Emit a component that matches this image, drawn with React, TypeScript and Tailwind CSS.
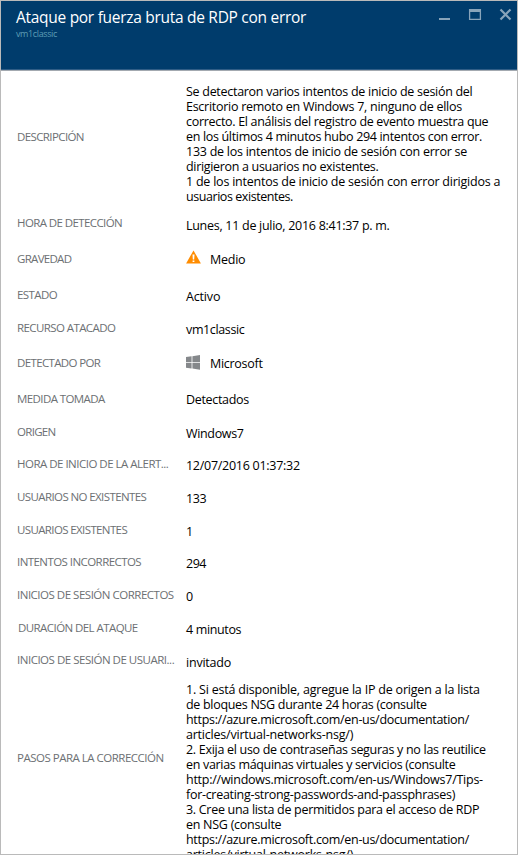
import type { ReactNode } from "react";

type Line = [text: string, tracking: string];

const description: Line[] = [
  ["Se detectaron varios intentos de inicio de sesión del", "tracking-[-0.285px]"],
  ["Escritorio remoto en Windows 7, ninguno de ellos", "tracking-[-0.267px]"],
  ["correcto. El análisis del registro de evento muestra que", "tracking-[-0.309px]"],
  ["en los últimos 4 minutos hubo 294 intentos con error.", "tracking-[-0.326px]"],
  ["133 de los intentos de inicio de sesión con error se", "tracking-[-0.257px]"],
  ["dirigieron a usuarios no existentes.", "tracking-[-0.32px]"],
  ["1 de los intentos de inicio de sesión con error dirigidos a", "tracking-[-0.224px]"],
  ["usuarios existentes.", "tracking-[-0.44px]"],
];

const steps: Line[] = [
  ["1. Si está disponible, agregue la IP de origen a la lista", "tracking-[-0.203px]"],
  ["de bloques NSG durante 24 horas (consulte", "tracking-[-0.304px]"],
  ["https://azure.microsoft.com/en-us/documentation/", "tracking-[-0.308px]"],
  ["articles/virtual-networks-nsg/)", "tracking-[-0.215px]"],
  ["2. Exija el uso de contraseñas seguras y no las reutilice", "tracking-[-0.295px]"],
  ["en varias máquinas virtuales y servicios (consulte", "tracking-[-0.316px]"],
  ["http://windows.microsoft.com/en-us/Windows7/Tips-", "tracking-[-0.251px]"],
  ["for-creating-strong-passwords-and-passphrases)", "tracking-[-0.298px]"],
  ["3. Cree una lista de permitidos para el acceso de RDP", "tracking-[-0.297px]"],
  ["en NSG (consulte", "tracking-[-0.27px]"],
  ["https://azure.microsoft.com/en-us/documentation/", "tracking-[-0.308px]"],
  ["articles/virtual-networks-nsg/)", "tracking-[-0.215px]"],
];

function WarningIcon() {
  return (
    <svg className="-mt-0.5 h-[14px] w-[15px] shrink-0" viewBox="0 0 15 14">
      <path d="M7.5 0.4 L14.9 13.5 H0.1 Z" fill="#ff8c00" />
      <path d="M6.5 4.6 h2 l-0.3 5 h-1.4 Z M6.6 10.4 h1.8 v1.6 h-1.8 Z" fill="#fff" />
    </svg>
  );
}

function WindowsIcon() {
  return (
    <svg className="-mt-px h-[15px] w-[14px] shrink-0" viewBox="0 0 14 15" fill="#85888b">
      <path d="M0 2.1 L5.6 1.3 V7 H0 Z M6.4 1.2 L14 0.1 V7 H6.4 Z M0 7.8 H5.6 V13.5 L0 12.7 Z M6.4 7.8 H14 V14.8 L6.4 13.6 Z" />
    </svg>
  );
}

function Row({ label, row, labelClass, valueClass, children }: {
  label: string;
  row: string;
  labelClass: string;
  valueClass: string;
  children: ReactNode;
}) {
  return (
    <div className={`flex shrink-0 items-start pl-4 ${row}`}>
      <div className={`w-[169px] shrink-0 text-[11.5px] leading-[15px] text-[#6c7073] ${labelClass}`}>{label}</div>
      <div className={`text-[12.5px] leading-[15px] text-black ${valueClass}`}>{children}</div>
    </div>
  );
}

function Lines({ lines }: { lines: Line[] }) {
  return (
    <>
      {lines.map(([text, tracking], i) => (
        <p key={i} className={tracking}>{text}</p>
      ))}
    </>
  );
}

export default function App() {
  return (
    <div className="flex h-[855px] w-[518px] flex-col overflow-hidden whitespace-nowrap border border-[#bababa] bg-white font-['Open_Sans','Noto_Sans',sans-serif]">
      <header className="flex h-[70px] shrink-0 justify-between border-b border-[#a3a9b0] bg-[#003c6c] pl-[15px] shadow-[inset_0_-1px_0_#2f5d86]">
        <div className="pt-[6px]">
          <h1 className="text-[15.5px] leading-[21px] tracking-[-0.29px] text-white">Ataque por fuerza bruta de RDP con error</h1>
          <p className="text-[9px] leading-[11px] tracking-[-0.38px] text-[#5d9cb5]">vm1classic</p>
        </div>
        <svg className="mt-[7px] mr-[5px] h-[13px] w-[73px]" viewBox="0 0 73 13" fill="none" stroke="#88a4ba">
          <path d="M0 11 H11" strokeWidth="2" />
          <path d="M30.6 1 V12 M41.4 1 V12 M30 11.4 H42" strokeWidth="1.3" />
          <path d="M30 2.5 H42" strokeWidth="3" />
          <path d="M61.5 1.5 L71.5 11.5 M71.5 1.5 L61.5 11.5" strokeWidth="2.2" />
        </svg>
      </header>
      <main className="flex flex-col pt-[13px]">
        <Row label="DESCRIPCIÓN" row="h-[131px]" labelClass="mt-[45px] tracking-[-0.61px]" valueClass="">
          <Lines lines={description} />
        </Row>
        <Row label="HORA DE DETECCIÓN" row="h-[36px]" labelClass="tracking-[-0.6px]" valueClass="mt-[3px] tracking-[-0.283px]">Lunes, 11 de julio, 2016 8:41:37 p. m.</Row>
        <Row label="GRAVEDAD" row="h-[36px]" labelClass="tracking-[-0.7px]" valueClass="mt-px flex gap-[9px] tracking-[-0.25px]"><WarningIcon />Medio</Row>
        <Row label="ESTADO" row="h-[33px]" labelClass="tracking-[-0.57px]" valueClass="mt-0.5 tracking-[-0.167px]">Activo</Row>
        <Row label="RECURSO ATACADO" row="h-[35px]" labelClass="tracking-[-0.59px]" valueClass="mt-0.5 tracking-[-0.366px]">vm1classic</Row>
        <Row label="DETECTADO POR" row="h-[36px]" labelClass="tracking-[-0.64px]" valueClass="mt-px flex gap-[10px] tracking-[-0.28px]"><WindowsIcon />Microsoft</Row>
        <Row label="MEDIDA TOMADA" row="h-[33px]" labelClass="tracking-[-0.59px]" valueClass="mt-px tracking-[-0.326px]">Detectados</Row>
        <Row label="ORIGEN" row="h-[32px]" labelClass="tracking-[-0.7px]" valueClass="mt-0.5 tracking-[-0.344px]">Windows7</Row>
        <Row label="HORA DE INICIO DE LA ALERT..." row="h-[33px]" labelClass="tracking-[-0.51px]" valueClass="mt-0.5 tracking-[-0.275px]">12/07/2016 01:37:32</Row>
        <Row label="USUARIOS NO EXISTENTES" row="h-[33px]" labelClass="tracking-[-0.6px]" valueClass="mt-0.5 tracking-[-0.38px]">133</Row>
        <Row label="USUARIOS EXISTENTES" row="h-[32px]" labelClass="tracking-[-0.62px]" valueClass="mt-0.5">1</Row>
        <Row label="INTENTOS INCORRECTOS" row="h-[33px]" labelClass="tracking-[-0.56px]" valueClass="mt-0.5 tracking-[-0.5px]">294</Row>
        <Row label="INICIOS DE SESIÓN CORRECTOS" row="h-[33px]" labelClass="tracking-[-0.49px]" valueClass="mt-0.5">0</Row>
        <Row label="DURACIÓN DEL ATAQUE" row="h-[32px]" labelClass="pl-px tracking-[-0.57px]" valueClass="mt-0.5 tracking-[-0.362px]">4 minutos</Row>
        <Row label="INICIOS DE SESIÓN DE USUARI..." row="h-[30px]" labelClass="tracking-[-0.485px]" valueClass="mt-[3px] tracking-[-0.214px]">invitado</Row>
        <Row label="PASOS PARA LA CORRECCIÓN" row="h-[180px]" labelClass="mt-[68px] tracking-[-0.5px]" valueClass="">
          <Lines lines={steps} />
        </Row>
      </main>
    </div>
  );
}
